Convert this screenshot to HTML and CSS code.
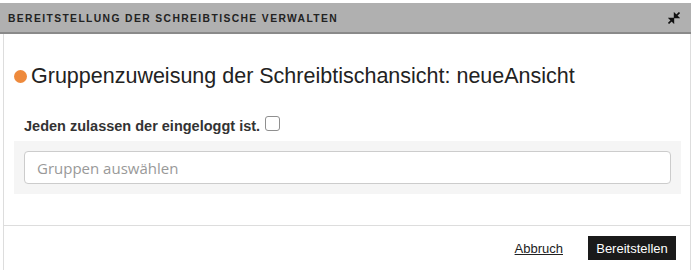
FILE: index.html
```html
<!DOCTYPE html>
<html lang="de">
<head>
<meta charset="utf-8">
<link rel="stylesheet" href="styles.css">
</head>
<body>
<div class="dialog">
  <div class="header">
    <span class="header-title">Bereitstellung der Schreibtische verwalten</span>
    <svg class="compress" width="12" height="12" viewBox="0 0 12 12">
      <path d="M11.5 0.5 L7.6 4.4 M6.6 1.8 V5.4 H10.2 Z" stroke="#111" stroke-width="1.6" fill="#111" stroke-linejoin="miter"/>
      <path d="M0.5 11.5 L4.4 7.6 M1.8 6.6 H5.4 V10.2 Z" stroke="#111" stroke-width="1.6" fill="#111" stroke-linejoin="miter"/>
    </svg>
  </div>
  <div class="body">
    <div class="content">
      <h2 class="title"><span class="dot"></span>Gruppenzuweisung der Schreibtischansicht: neueAnsicht</h2>
      <label class="allow">Jeden zulassen der eingeloggt ist. <span class="check"></span></label>
      <div class="panel">
        <div class="input">Gruppen auswählen</div>
      </div>
    </div>
    <div class="footer">
      <a class="cancel" href="#">Abbruch</a>
      <button class="primary">Bereitstellen</button>
    </div>
  </div>
</div>
</body>
</html>
```
FILE: styles.css
```css
html, body {
  margin: 0;
  padding: 0;
  background: #fff;
}
body {
  font-family: "Liberation Sans", Arial, sans-serif;
  color: #222;
}
.dialog {
  margin-top: 3px;
  width: 691px;
}
.header {
  height: 29px;
  background: #b0b0b0;
  border-bottom: 2px solid #8a8a8a;
  display: flex;
  align-items: center;
  justify-content: space-between;
  padding: 0 11px 0 8px;
}
.header-title {
  font-size: 10.3px;
  font-weight: bold;
  text-transform: uppercase;
  letter-spacing: 1.4px;
  color: #222;
  padding-top: 1px;
}
.compress {
  display: block;
  margin-top: 1px;
}
.body {
  margin-left: 3px;
  border-left: 1px solid #ddd;
  border-right: 1px solid #ddd;
  height: 236px;
}
.content {
  padding: 0 9px 0 10px;
  height: 191px;
  border-bottom: 1px solid #ddd;
}
.title {
  margin: 0;
  padding-top: 30px;
  font-size: 21.5px;
  line-height: 24px;
  font-weight: normal;
  color: #222;
  display: flex;
  align-items: center;
  height: 24px;
}
.dot {
  width: 13px;
  height: 13px;
  border-radius: 50%;
  background: #ee8a3c;
  margin-right: 4px;
  margin-top: 1px;
  flex: none;
}
.allow {
  display: flex;
  align-items: center;
  margin-top: 30px;
  margin-left: 10px;
  font-size: 14.5px;
  line-height: 16px;
  font-weight: bold;
  color: #333;
  height: 16px;
}
.check {
  display: inline-block;
  width: 13px;
  height: 13px;
  border: 1px solid #8f8f8f;
  border-radius: 3px;
  margin-left: 5px;
  margin-top: -6px;
  background: #fff;
}
.panel {
  margin-top: 7px;
  background: #f5f5f5;
  padding: 10px;
  height: 33px;
}
.input {
  height: 31px;
  border: 1px solid #ccc;
  border-radius: 4px;
  background: #fff;
  font-family: "Open Sans", sans-serif;
  font-size: 15px;
  color: #999;
  display: flex;
  align-items: center;
  padding-left: 12px;
}
.footer {
  display: flex;
  justify-content: flex-end;
  align-items: center;
  padding: 10px 14px 0 0;
  gap: 25px;
}
.cancel {
  font-size: 13px;
  color: #222;
  text-decoration: underline;
}
.primary {
  background: #1a1a1a;
  color: #fff;
  border: none;
  font-family: "Liberation Sans", Arial, sans-serif;
  font-size: 13px;
  height: 24px;
  width: 88px;
  padding: 0;
  border-radius: 0;
}
```
